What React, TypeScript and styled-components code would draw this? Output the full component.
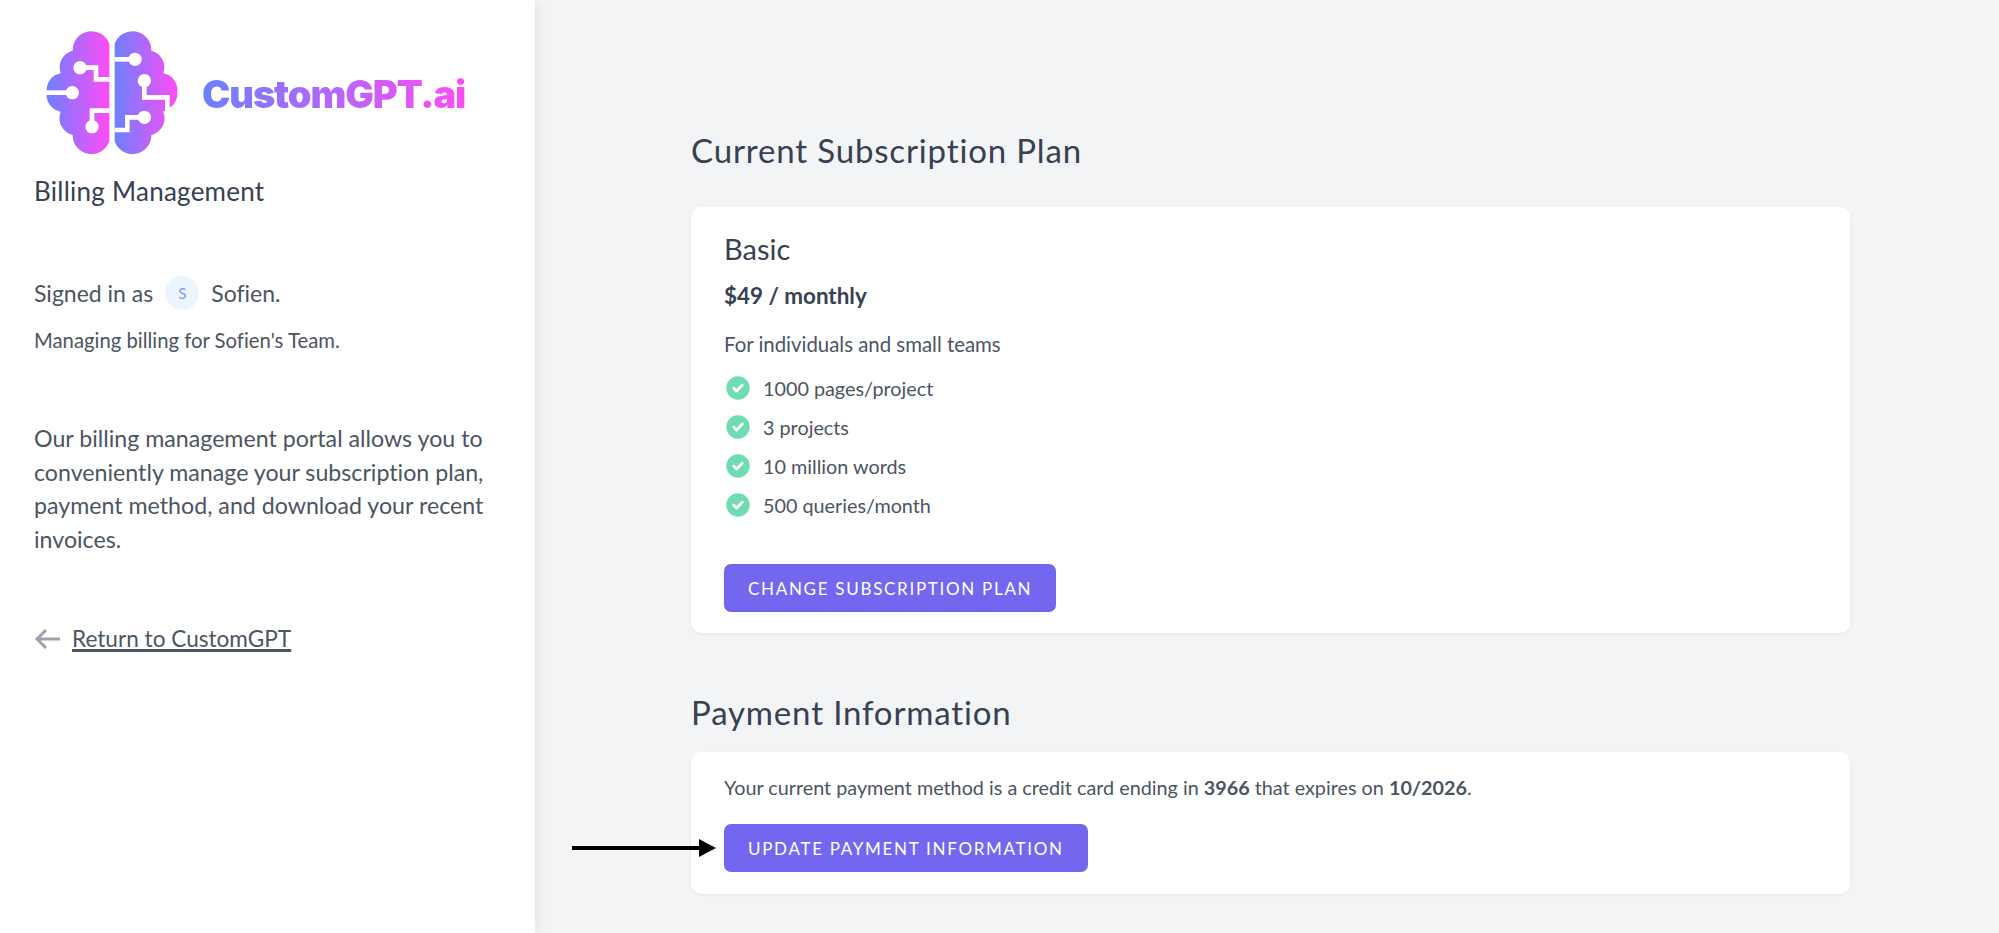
import React from 'react';
import styled, { createGlobalStyle } from 'styled-components';

const features = ['1000 pages/project', '3 projects', '10 million words', '500 queries/month'];

const GlobalStyle = createGlobalStyle`
  html, body {
    margin: 0;
    padding: 0;
    height: 100%;
    background: #f3f4f6;
  }
  body {
    font-family: 'Lato', 'Noto Sans', sans-serif;
    font-variant-ligatures: none;
    color: #4b5563;
  }
`;

const BrainLogo: React.FC = () => (
  <LogoSvg viewBox="0 0 510 450" aria-hidden="true">
    <defs>
      <linearGradient id="brainLeft" gradientUnits="userSpaceOnUse" x1="50" y1="0" x2="238" y2="0">
        <stop offset="0" stopColor="#6c80ff" />
        <stop offset="1" stopColor="#ff4cf6" />
      </linearGradient>
      <linearGradient id="brainRight" gradientUnits="userSpaceOnUse" x1="254" y1="0" x2="442" y2="0">
        <stop offset="0" stopColor="#6c80ff" />
        <stop offset="1" stopColor="#ff4cf6" />
      </linearGradient>
    </defs>
    <path
      fill="url(#brainLeft)"
      d="M238 72A56.5 56.5 0 0 0 128 92A52 52 0 0 0 92 160A52 52 0 0 0 50 218A52 52 0 0 0 92 275A52 52 0 0 0 128 345A56.5 56.5 0 0 0 238 364Z"
    />
    <path
      fill="url(#brainRight)"
      d="M254 72A56.5 56.5 0 0 1 364 92A52 52 0 0 1 400 160A52 52 0 0 1 442 218A50 50 0 0 1 420 262L400 275A52 52 0 0 1 364 345A56.5 56.5 0 0 1 254 364Z"
    />
    <g fill="none" stroke="#fff" strokeWidth="14">
      <path d="M150 143H198V178H238" />
      <path d="M127 218H46" />
      <path d="M186 320V272H238" />
      <path d="M315 118H254" />
      <path d="M343 182V232H412V272" />
      <path d="M343 292H292V330H254" />
    </g>
    <g fill="#fff">
      <circle cx="150" cy="143" r="20" />
      <circle cx="127" cy="218" r="20" />
      <circle cx="186" cy="320" r="20" />
      <circle cx="315" cy="118" r="20" />
      <circle cx="343" cy="182" r="20" />
      <circle cx="343" cy="292" r="20" />
    </g>
  </LogoSvg>
);

const CheckIcon: React.FC = () => (
  <CheckSvg viewBox="0 0 20 20" aria-hidden="true">
    <path
      fill="#6fdcb1"
      fillRule="evenodd"
      d="M10 18a8 8 0 1 0 0-16 8 8 0 0 0 0 16Zm3.7-9.3a1 1 0 0 0-1.4-1.4L9 10.6 7.7 9.3a1 1 0 0 0-1.4 1.4l2 2a1 1 0 0 0 1.4 0l4-4Z"
      clipRule="evenodd"
      transform="translate(10 10) scale(1.22) translate(-10 -10)"
    />
  </CheckSvg>
);

const App: React.FC = () => (
  <Page>
    <GlobalStyle />
    <Sidebar>
      <LogoRow>
        <BrainLogo />
        <LogoText>CustomGPT.ai</LogoText>
      </LogoRow>
      <PortalName>Billing Management</PortalName>
      <SignedIn>
        Signed in as <Avatar>S</Avatar> Sofien.
      </SignedIn>
      <Managing>Managing billing for Sofien's Team.</Managing>
      <Intro>
        Our billing management portal allows you to conveniently manage your subscription plan,
        payment method, and download your recent invoices.
      </Intro>
      <ReturnLink href="#">
        <svg width="28" height="24" viewBox="0 0 28 24" fill="none" stroke="#9ca3af" strokeWidth="3" aria-hidden="true">
          <path d="M26 12H3M12 3l-9 9 9 9" />
        </svg>
        <span>Return to CustomGPT</span>
      </ReturnLink>
    </Sidebar>
    <Main>
      <SubscriptionSection>
        <SubscriptionTitle>Current Subscription Plan</SubscriptionTitle>
        <PlanCard>
          <PlanName>Basic</PlanName>
          <PlanPrice>$49 / monthly</PlanPrice>
          <PlanBlurb>For individuals and small teams</PlanBlurb>
          <FeatureList>
            {features.map((feature) => (
              <FeatureItem key={feature}>
                <CheckIcon />
                {feature}
              </FeatureItem>
            ))}
          </FeatureList>
          <ActionButton>Change Subscription Plan</ActionButton>
        </PlanCard>
      </SubscriptionSection>
      <section>
        <PaymentTitle>Payment Information</PaymentTitle>
        <PaymentCard>
          <PaymentText>
            Your current payment method is a credit card ending in <strong>3966</strong> that expires on{' '}
            <strong>10/2026</strong>.
          </PaymentText>
          <ButtonWrap>
            <PointerArrow viewBox="0 0 144 18" aria-hidden="true">
              <path d="M0 9H130" stroke="#000" strokeWidth="4" />
              <path d="M127 0L144 9L127 18Z" fill="#000" />
            </PointerArrow>
            <ActionButton>Update Payment Information</ActionButton>
          </ButtonWrap>
        </PaymentCard>
      </section>
    </Main>
  </Page>
);

const Page = styled.div`
  display: flex;
  height: 933px;
  overflow: hidden;
`;

const Sidebar = styled.aside`
  width: 535px;
  flex-shrink: 0;
  box-sizing: border-box;
  padding: 0 34px;
  background: #fff;
  box-shadow: 0 0 14px rgba(0, 0, 0, 0.1);
`;

const LogoRow = styled.div`
  display: flex;
  align-items: center;
  height: 170px;
  margin-left: -4px;
`;

const LogoSvg = styled.svg`
  width: 170px;
  height: 150px;
  margin-top: 20px;
  flex-shrink: 0;
`;

const LogoText = styled.span`
  margin-left: 2px;
  margin-top: 18px;
  font-family: 'Inter', sans-serif;
  font-size: 38px;
  font-weight: 900;
  letter-spacing: -1.1px;
  background: linear-gradient(90deg, #6c80ff 0%, #ff4cf6 100%);
  -webkit-background-clip: text;
  background-clip: text;
  color: transparent;
`;

const PortalName = styled.div`
  margin-top: 6px;
  font-size: 26px;
  line-height: 30px;
  font-weight: 400;
  letter-spacing: 0.25px;
  color: #374151;
`;

const SignedIn = styled.div`
  display: flex;
  align-items: center;
  gap: 12px;
  margin-top: 70px;
  font-size: 23px;
  line-height: 34px;
`;

const Avatar = styled.span`
  display: flex;
  align-items: center;
  justify-content: center;
  width: 34px;
  height: 34px;
  border-radius: 50%;
  background: #ebf4ff;
  color: #7f9cf5;
  font-size: 15px;
`;

const Managing = styled.div`
  margin-top: 17px;
  font-size: 20.3px;
  line-height: 26px;
`;

const Intro = styled.p`
  margin: 69px 0 0;
  font-size: 23.2px;
  line-height: 33.5px;
`;

const ReturnLink = styled.a`
  display: flex;
  align-items: center;
  gap: 10px;
  margin-top: 66px;
  font-size: 22.6px;
  line-height: 34px;
  color: #4b5563;
  span {
    text-decoration: underline;
    text-underline-offset: 3px;
  }
`;

const Main = styled.main`
  flex: 1;
  box-sizing: border-box;
  padding: 131px 149px 0 156px;
`;

const SubscriptionSection = styled.section`
  margin-bottom: 60px;
`;

const SectionTitle = styled.h2`
  font-size: 33px;
  line-height: 38px;
  font-weight: 400;
  letter-spacing: 0.85px;
  color: #374151;
`;

const SubscriptionTitle = styled(SectionTitle)`
  margin: 0 0 38px;
`;

const PaymentTitle = styled(SectionTitle)`
  margin: 0 0 21px;
`;

const Card = styled.div`
  box-sizing: border-box;
  background: #fff;
  border-radius: 10px;
  box-shadow: 0 1px 3px rgba(0, 0, 0, 0.06);
  padding: 0 33px;
`;

const PlanCard = styled(Card)`
  height: 426px;
  padding-top: 24px;
`;

const PaymentCard = styled(Card)`
  height: 142px;
  padding-top: 20px;
`;

const PlanName = styled.div`
  font-size: 29px;
  line-height: 36px;
  font-weight: 400;
  color: #374151;
`;

const PlanPrice = styled.div`
  margin-top: 13px;
  font-size: 22.4px;
  line-height: 32px;
  font-weight: 700;
  color: #374151;
`;

const PlanBlurb = styled.div`
  margin-top: 17px;
  font-size: 20.4px;
  line-height: 30px;
`;

const FeatureList = styled.ul`
  list-style: none;
  margin: 14px 0 44px;
  padding: 0 0 0 2px;
  display: flex;
  flex-direction: column;
  gap: 9px;
`;

const FeatureItem = styled.li`
  display: flex;
  align-items: center;
  gap: 13px;
  height: 30px;
  font-size: 19.8px;
`;

const CheckSvg = styled.svg`
  width: 24px;
  height: 24px;
  flex-shrink: 0;
`;

const ActionButton = styled.button`
  display: block;
  height: 48px;
  padding: 0 24px;
  border: none;
  border-radius: 7px;
  background: #7367f0;
  color: #fff;
  font-family: inherit;
  font-size: 17px;
  font-weight: 400;
  letter-spacing: 1.7px;
  text-transform: uppercase;
`;

const PaymentText = styled.p`
  margin: 0;
  font-size: 19.8px;
  line-height: 30px;
  strong {
    font-weight: 700;
  }
`;

const ButtonWrap = styled.div`
  position: relative;
  margin-top: 22px;
  width: fit-content;
`;

const PointerArrow = styled.svg`
  position: absolute;
  left: -152px;
  top: 15px;
  width: 144px;
  height: 18px;
`;

export default App;
